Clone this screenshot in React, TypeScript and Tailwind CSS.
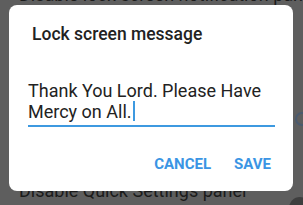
export default function App() {
  return (
    <div className="relative w-[303px] h-[205px] overflow-hidden bg-[#5e5e5e]" style={{ fontFamily: 'Roboto, "Noto Sans", sans-serif' }}>
      <div className="flex flex-col">
        <div className="pl-[19px] -mt-[15px] text-[18px] leading-[20px] text-[#1b1b1b] whitespace-nowrap">Disable lock screen notification panel</div>
        <div className="mt-[174px] pl-[19px] text-[18px] leading-[24px] text-[#1b1b1b] whitespace-nowrap">Disable Quick Settings panel</div>
      </div>
      <div className="absolute right-[-6px] top-[112px] w-[14px] h-[14px] rounded-full border-2 border-[#4a5a6e]" />
      <div className="absolute right-[-8px] top-[197px] w-[22px] h-[22px] rounded-full bg-[#3e3e3e]" />
      <div className="absolute left-[9px] top-[5px] w-[284px] h-[186px] rounded-[8px] bg-white flex flex-col">
        <div className="pl-[23px] pt-[18px] text-[17.5px] leading-[22px] font-medium text-[#222]">Lock screen message</div>
        <div className="ml-[19px] mr-[18px] mt-[35px] border-b-2 border-[#3d99e0] pb-[3px]">
          <div className="text-[18px] leading-[21px] text-[#222]">
            Thank You Lord. Please Have Mercy on All.<span className="inline-block align-[-3px] w-[2px] h-[20px] bg-[#3d99e0] ml-[1px]" />
          </div>
        </div>
        <div className="flex justify-end gap-[23px] pr-[22px] mt-[29px] text-[15px] leading-[16px] font-bold text-[#3a95e4]">
          <span>CANCEL</span>
          <span>SAVE</span>
        </div>
      </div>
    </div>
  );
}
